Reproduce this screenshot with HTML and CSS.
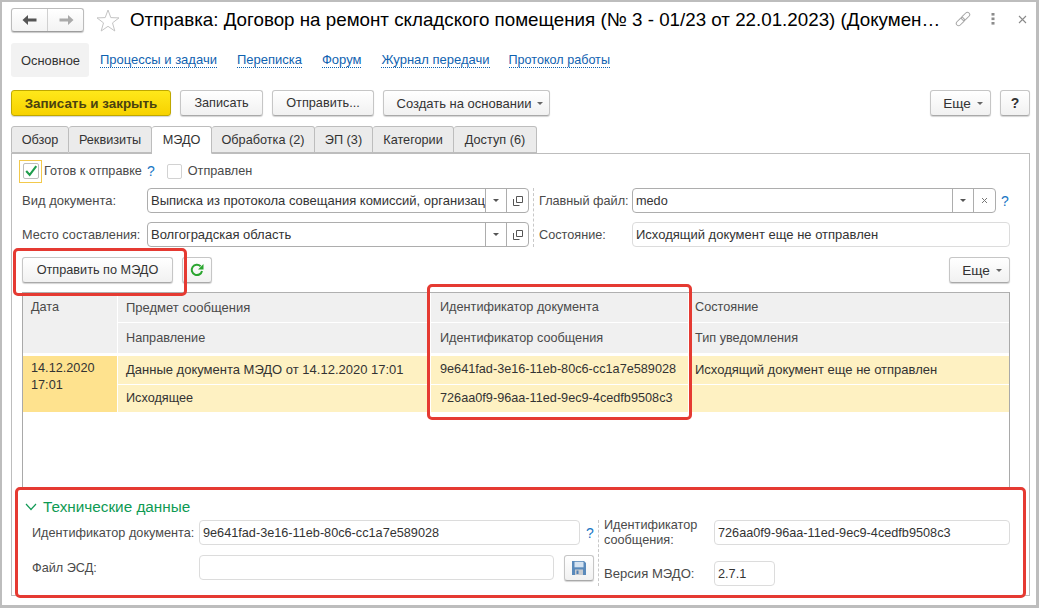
FILE: index.html
```html
<!DOCTYPE html>
<html lang="ru">
<head>
<meta charset="utf-8">
<title>Отправка</title>
<link rel="stylesheet" href="styles.css">
</head>
<body>
<div class="window">
  <header class="titlebar">
    <div class="navgroup">
      <button class="navbtn"><svg width="16" height="12" viewBox="0 0 16 12"><path d="M0.5 6 L6 1 V4.5 H14.5 V7.5 H6 V11 Z" fill="#555"/></svg></button>
      <button class="navbtn navbtn-off"><svg width="16" height="12" viewBox="0 0 16 12"><path d="M15.5 6 L10 1 V4.5 H1.5 V7.5 H10 V11 Z" fill="#aaa"/></svg></button>
    </div>
    <svg class="star" width="24" height="23" viewBox="0 0 24 23"><path d="M12 1 L14.8 8.6 L23 8.9 L16.5 13.9 L18.8 22 L12 17.3 L5.2 22 L7.5 13.9 L1 8.9 L9.2 8.6 Z" fill="#fff" stroke="#c4c4c4" stroke-width="1"/></svg>
    <h1 class="title">Отправка: Договор на ремонт складского помещения (№ 3 - 01/23 от 22.01.2023) (Докумен…</h1>
    <svg class="wicon wicon-link" width="16" height="16" viewBox="0 0 16 16"><g fill="none" stroke="#a5a5a5" stroke-width="1" transform="rotate(-45 8 8)"><rect x="-0.5" y="5.7" width="9.5" height="4.6" rx="2.3"/><rect x="7" y="5.7" width="9.5" height="4.6" rx="2.3"/></g></svg>
    <svg class="wicon wicon-menu" width="4" height="12" viewBox="0 0 4 12"><g fill="#8c8c8c"><rect x="0.5" y="0" width="3" height="2.6"/><rect x="0.5" y="4.5" width="3" height="2.6"/><rect x="0.5" y="9" width="3" height="2.6"/></g></svg>
    <svg class="wicon wicon-close" width="9" height="9" viewBox="0 0 9 9"><path d="M1 1 L8 8 M8 1 L1 8" stroke="#8a8a8a" stroke-width="1.1"/></svg>
  </header>

  <nav class="sections">
    <span class="section-active">Основное</span>
    <a class="link">Процессы и задачи</a>
    <a class="link">Переписка</a>
    <a class="link">Форум</a>
    <a class="link">Журнал передачи</a>
    <a class="link">Протокол работы</a>
  </nav>

  <div class="toolbar">
    <button class="btn btn-primary w-160">Записать и закрыть</button>
    <button class="btn w-83">Записать</button>
    <button class="btn w-102">Отправить...</button>
    <button class="btn btn-wide w-167">Создать на основании<i class="caret"></i></button>
    <span class="spacer"></span>
    <button class="btn btn-more w-61">Еще<i class="caret"></i></button>
    <button class="btn btn-help">?</button>
  </div>

  <div class="tabs">
    <span class="tab w-58">Обзор</span>
    <span class="tab w-83">Реквизиты</span>
    <span class="tab tab-active w-60">МЭДО</span>
    <span class="tab w-103">Обработка (2)</span>
    <span class="tab w-58">ЭП (3)</span>
    <span class="tab w-81">Категории</span>
    <span class="tab w-83">Доступ (6)</span>
  </div>

  <main class="panel">
    <div class="checks">
      <span class="focus"><span class="checkbox"><svg width="16" height="14" viewBox="0 0 16 14"><path d="M2.5 7 L6.5 11.5 L14 1.5" fill="none" stroke="#1f9d4d" stroke-width="2.4"/></svg></span></span>
      <span class="check-label">Готов к отправке</span>
      <span class="hint hint-check">?</span>
      <span class="checkbox checkbox-plain"></span>
      <span class="check-label">Отправлен</span>
    </div>

    <div class="form">
      <div class="form-col form-col-left">
        <div class="field">
          <label class="label label-wide w-125">Вид документа:</label>
          <div class="input w-382">
            <span class="value value-wide clip">Выписка из протокола совещания комиссий, организац</span>
            <span class="seg"><i class="caret caret-dark"></i></span>
            <span class="seg"><svg width="10" height="10" viewBox="0 0 10 10"><path d="M0.5 3 V9.5 H6.5 M3.5 0.5 H9.5 V6.5 H3.5 Z" fill="none" stroke="#555"/></svg></span>
          </div>
        </div>
        <div class="field">
          <label class="label w-125">Место составления:</label>
          <div class="input w-382">
            <span class="value value-wide clip">Волгоградская область</span>
            <span class="seg"><i class="caret caret-dark"></i></span>
            <span class="seg"><svg width="10" height="10" viewBox="0 0 10 10"><path d="M0.5 3 V9.5 H6.5 M3.5 0.5 H9.5 V6.5 H3.5 Z" fill="none" stroke="#555"/></svg></span>
          </div>
        </div>
      </div>
      <div class="form-col form-col-right">
        <div class="field">
          <label class="label w-93">Главный файл:</label>
          <div class="input w-364">
            <span class="value clip">medo</span>
            <span class="seg"><i class="caret caret-dark"></i></span>
            <span class="seg seg-x"><svg width="7" height="7" viewBox="0 0 7 7"><path d="M1 1 L6 6 M6 1 L1 6" stroke="#777"/></svg></span>
          </div>
          <span class="hint hint-file">?</span>
        </div>
        <div class="field">
          <label class="label w-93">Состояние:</label>
          <div class="input input-ro w-378"><span class="value value-wide">Исходящий документ еще не отправлен</span></div>
        </div>
      </div>
    </div>

    <div class="subbar">
      <button class="btn w-151">Отправить по МЭДО</button>
      <button class="btn w-30"><svg width="14" height="14" viewBox="0 0 14 14"><path d="M12 8 A5.2 5.2 0 1 1 10.6 3.2" fill="none" stroke="#2aa52f" stroke-width="2"/><path d="M13.5 1 V6.5 H8 Z" fill="#2aa52f"/></svg></button>
      <span class="spacer"></span>
      <button class="btn btn-more w-61">Еще<i class="caret"></i></button>
    </div>

    <div class="table">
      <div class="cell head c-date">Дата</div>
      <div class="cell head cell-wide">Предмет сообщения</div>
      <div class="cell head head-id">Идентификатор документа</div>
      <div class="cell head head-last">Состояние</div>
      <div class="cell head">Направление</div>
      <div class="cell head head-id">Идентификатор сообщения</div>
      <div class="cell head head-last">Тип уведомления</div>
      <div class="gap"></div>
      <div class="cell data c-date c-date-data">14.12.2020<br>17:01</div>
      <div class="cell data cell-wide">Данные документа МЭДО от 14.12.2020 17:01</div>
      <div class="cell data head-id">9e641fad-3e16-11eb-80c6-cc1a7e589028</div>
      <div class="cell data head-last cell-wide">Исходящий документ еще не отправлен</div>
      <div class="cell data">Исходящее</div>
      <div class="cell data head-id">726aa0f9-96aa-11ed-9ec9-4cedfb9508c3</div>
      <div class="cell data head-last"></div>
    </div>

    <section class="tech">
      <div class="tech-head">
        <svg width="12" height="8" viewBox="0 0 12 8"><path d="M1 1 L6 6.5 L11 1" fill="none" stroke="#129a56" stroke-width="1.2"/></svg>
        <span>Технические данные</span>
      </div>
      <div class="tech-body">
        <div class="tech-col tech-col-left">
          <div class="field field-tech">
            <label class="label w-167">Идентификатор документа:</label>
            <div class="input input-ro w-381"><span class="value">9e641fad-3e16-11eb-80c6-cc1a7e589028</span></div>
            <span class="hint hint-tech">?</span>
          </div>
          <div class="field field-tech field-esd">
            <label class="label w-167">Файл ЭСД:</label>
            <div class="input input-ro w-355"></div>
            <button class="btn btn-save w-30"><svg width="16" height="16" viewBox="0 0 16 16"><path d="M1 1 H13 L15 3 V15 H1 Z" fill="#5a8abb"/><rect x="3.5" y="1.8" width="9" height="5.5" fill="#d5e3f1"/><rect x="4" y="9.5" width="8" height="5.5" fill="#c9ccd0"/><rect x="5.5" y="10.5" width="2" height="3.5" fill="#4d7fb5"/></svg></button>
          </div>
        </div>
        <div class="tech-col tech-col-right">
          <div class="field field-tech">
            <label class="label label-wrap w-110">Идентификатор сообщения:</label>
            <div class="input input-ro w-296"><span class="value">726aa0f9-96aa-11ed-9ec9-4cedfb9508c3</span></div>
          </div>
          <div class="field field-tech field-ver">
            <label class="label label-ver w-110">Версия МЭДО:</label>
            <div class="input input-ro w-61"><span class="value">2.7.1</span></div>
          </div>
        </div>
      </div>
    </section>
  </main>

  <div class="mark mark-send"></div>
  <div class="mark mark-ids"></div>
  <div class="mark mark-tech"></div>
</div>
</body>
</html>
```
FILE: styles.css
```css
* { box-sizing: border-box; }
html, body { margin: 0; padding: 0; }
body { font-family: "Liberation Sans", Arial, sans-serif; font-size: 12.7px; color: #333; background: #fff; }
button { font: inherit; color: inherit; padding: 0; }

.window { position: relative; width: 1039px; height: 608px; border: solid #bdbdbd; border-width: 2px 3px 3px 2px; background: #fff; padding: 6px 6px 0 9px; overflow: hidden; }

.titlebar { display: flex; align-items: center; height: 24px; }
.navgroup { display: flex; width: 73px; height: 24px; border: 1px solid #bcbcbc; border-bottom-color: #9d9d9d; border-radius: 3px; background: linear-gradient(#fff, #f3f3f3); box-shadow: 0 1px 1px #c8c8c8; }
.navbtn { flex: 1; border: 0; background: none; display: flex; align-items: center; justify-content: center; }
.navbtn-off { border-left: 1px solid #d0d0d0; }
.star { margin-left: 12px; flex: none; }
.title { margin: 0 0 0 10px; font-size: 18.77px; font-weight: 400; color: #000; white-space: nowrap; width: 825px; }
.wicon { flex: none; }
.wicon-link { margin-left: 0; margin-top: -2px; }
.wicon-menu { margin-left: 20px; margin-top: -2px; }
.wicon-close { margin-left: 23px; margin-top: -2px; }

.sections { display: flex; align-items: center; height: 34px; margin-top: 11px; font-size: 13px; }
.section-active { display: flex; align-items: center; justify-content: center; width: 78px; height: 34px; background: #f2f2f2; border-radius: 3px; margin-right: 11px; padding-left: 1px; font-size: 12.9px; }
.link { color: #0f62b0; border-bottom: 1px dotted #0f62b0; line-height: 14px; margin-right: 20px; }
.link:nth-last-child(2) { margin-right: 19px; }
.link:last-child { font-size: 12.6px; }

.toolbar { display: flex; align-items: stretch; height: 26px; margin-top: 13px; gap: 9px; }
.spacer { flex: 1; }
.btn { display: flex; align-items: center; justify-content: center; height: 26px; border: 1px solid #c6c6c6; border-bottom-color: #a9a9a9; border-radius: 3px; background: linear-gradient(#fff, #f1f1f1); box-shadow: 0 1px 1px #d4d4d4; flex: none; white-space: nowrap; }
.btn-primary { background: linear-gradient(#ffe81a, #f7d200); border-color: #bfa800; font-weight: 700; font-size: 13.4px; color: #4a4210; }
.btn-wide { font-size: 13px; padding-left: 7px; }
.btn-more { font-size: 13.6px; padding-left: 5px; }
.btn-help { width: 30px; font-weight: 700; font-size: 14px; }
.caret { display: inline-block; width: 0; height: 0; border: 3px solid transparent; border-top: 3px solid #666; border-bottom: 0; margin-left: 6px; }
.caret-dark { margin-left: 0; border-top-color: #555; }

.w-30 { width: 30px; } .w-58 { width: 58px; } .w-60 { width: 60px; } .w-61 { width: 61px; }
.w-81 { width: 81px; } .w-83 { width: 83px; } .w-93 { width: 93px; } .w-102 { width: 102px; }
.w-103 { width: 103px; } .w-110 { width: 110px; } .w-125 { width: 125px; } .w-151 { width: 151px; }
.w-160 { width: 160px; } .w-167 { width: 167px; } .w-296 { width: 296px; } .w-355 { width: 355px; }
.w-364 { width: 364px; } .w-378 { width: 378px; } .w-381 { width: 381px; } .w-382 { width: 382px; }

.tabs { display: flex; height: 27px; margin-top: 10px; position: relative; z-index: 1; }
.tab { display: flex; align-items: center; justify-content: center; height: 27px; background: #ebebeb; border: 1px solid #bdbdbd; border-bottom: 1px solid #bdbdbd; border-left-width: 0; border-radius: 3px 3px 0 0; }
.tab:first-child { border-left-width: 1px; }
.tab-active { background: #fff; border-bottom-color: #fff; height: 28px; }

.panel { height: 443px; width: 1019px; border: 1px solid #bdbdbd; padding: 0 19px 0 10px; margin-top: 0; display: flex; flex-direction: column; }
.checks { display: flex; align-items: center; height: 24px; margin-top: 5px; margin-left: -3px; }
.focus { display: flex; align-items: center; justify-content: center; width: 23px; height: 23px; border: 1px solid #f2c94c; }
.checkbox { display: flex; align-items: center; justify-content: center; width: 16px; height: 16px; border: 1px solid #bdbdbd; border-radius: 2px; background: #fff; flex: none; }
.checkbox svg { margin-top: -1px; }
.checkbox-plain { width: 15px; height: 15px; margin-left: 12px; border-color: #d2d2d2; }
.check-label { margin-left: 2px; color: #4a4a4a; }
.checkbox-plain + .check-label { margin-left: 6px; }
.hint { color: #1976c4; font-size: 14px; }
.hint-check { margin-left: 5px; }
.hint-file { margin-left: 5px; }
.hint-tech { margin-left: 6px; }

.form { display: flex; margin-top: 5px; }
.form-col { display: flex; flex-direction: column; gap: 9px; }
.form-col-left { width: 512px; }
.form-col-right { padding-left: 5px; border-left: 1px dashed #c8c8c8; margin-left: 0; }
.field { display: flex; align-items: center; height: 25px; }
.label { color: #4a4a4a; flex: none; white-space: nowrap; }
.label-wide { font-size: 13px; }
.label-ver { font-size: 13.1px; }
.label-wrap { white-space: normal; width: 110px; line-height: 15px; }
.input { display: flex; align-items: center; height: 25px; border: 1px solid #adadad; border-radius: 4px; background: #fff; flex: none; overflow: hidden; }
.input-ro { border-color: #dcdcdc; }
.value { flex: 1; padding-left: 3px; color: #333; white-space: nowrap; overflow: hidden; min-width: 0; }
.value-wide { font-size: 13px; }
.seg { display: flex; align-items: center; justify-content: center; width: 21px; height: 100%; border-left: 1px solid #adadad; flex: none; }
.seg:last-child { width: 22px; }

.subbar { display: flex; align-items: flex-start; gap: 9px; height: 26px; margin-top: 10px; }

.table { display: grid; grid-template-columns: 95px 313px 258px 1fr; grid-template-rows: 30px 31px 2px 29px 28px; width: 988px; height: 195px; margin-top: 9px; border: 1px solid #a9a9a9; border-bottom: 0; border-top-color: #b0b0b0; align-content: start; position: relative; background-image: linear-gradient(#e3e3e3, #e3e3e3); background-size: 100% 1px; background-position: 0 119px; background-repeat: no-repeat; }
.cell { display: flex; align-items: center; padding-left: 8px; padding-bottom: 2px; white-space: nowrap; border-right: 1px solid #fff; border-bottom: 1px solid #fff; }
.cell-wide { font-size: 13px; }
.head { background: #f0f0f0; color: #4a4a4a; padding-bottom: 1px; }
.c-date { grid-row: 1 / span 2; align-items: flex-start; padding-top: 7px; }
.head-id { padding-left: 9px; }
.head-last { padding-left: 6px; border-right: 0; }
.gap { grid-column: 1 / -1; background: #fff; }
.data { background: #fef1c2; color: #333; }
.c-date-data { grid-row: 4 / span 2; background: #fee28e; line-height: 17px; padding-top: 4px; display: block; }

.tech { margin-left: -10px; margin-right: -19px; padding-top: 10px; }
.tech-head { display: flex; align-items: center; height: 20px; margin-left: 13px; color: #0e9a53; font-size: 15.3px; gap: 6px; }
.tech-body { display: flex; margin-top: 3px; margin-left: 20px; }
.tech-col-left { width: 566px; }
.tech-col-right { padding-left: 5px; border-left: 1px dashed #c8c8c8; }
.field-tech { height: 25px; }
.field-esd { margin-top: 10px; }
.field-ver { margin-top: 16px; }
.btn-save { margin-left: 10px; }

.mark { position: absolute; border: 3px solid #e53a32; border-radius: 5px; pointer-events: none; z-index: 5; }
.mark-send { left: 11px; top: 246px; width: 174px; height: 48px; }
.mark-ids { left: 425px; top: 282px; width: 265px; height: 136px; }
.mark-tech { left: 13px; top: 485px; width: 1011px; height: 111px; }
```
